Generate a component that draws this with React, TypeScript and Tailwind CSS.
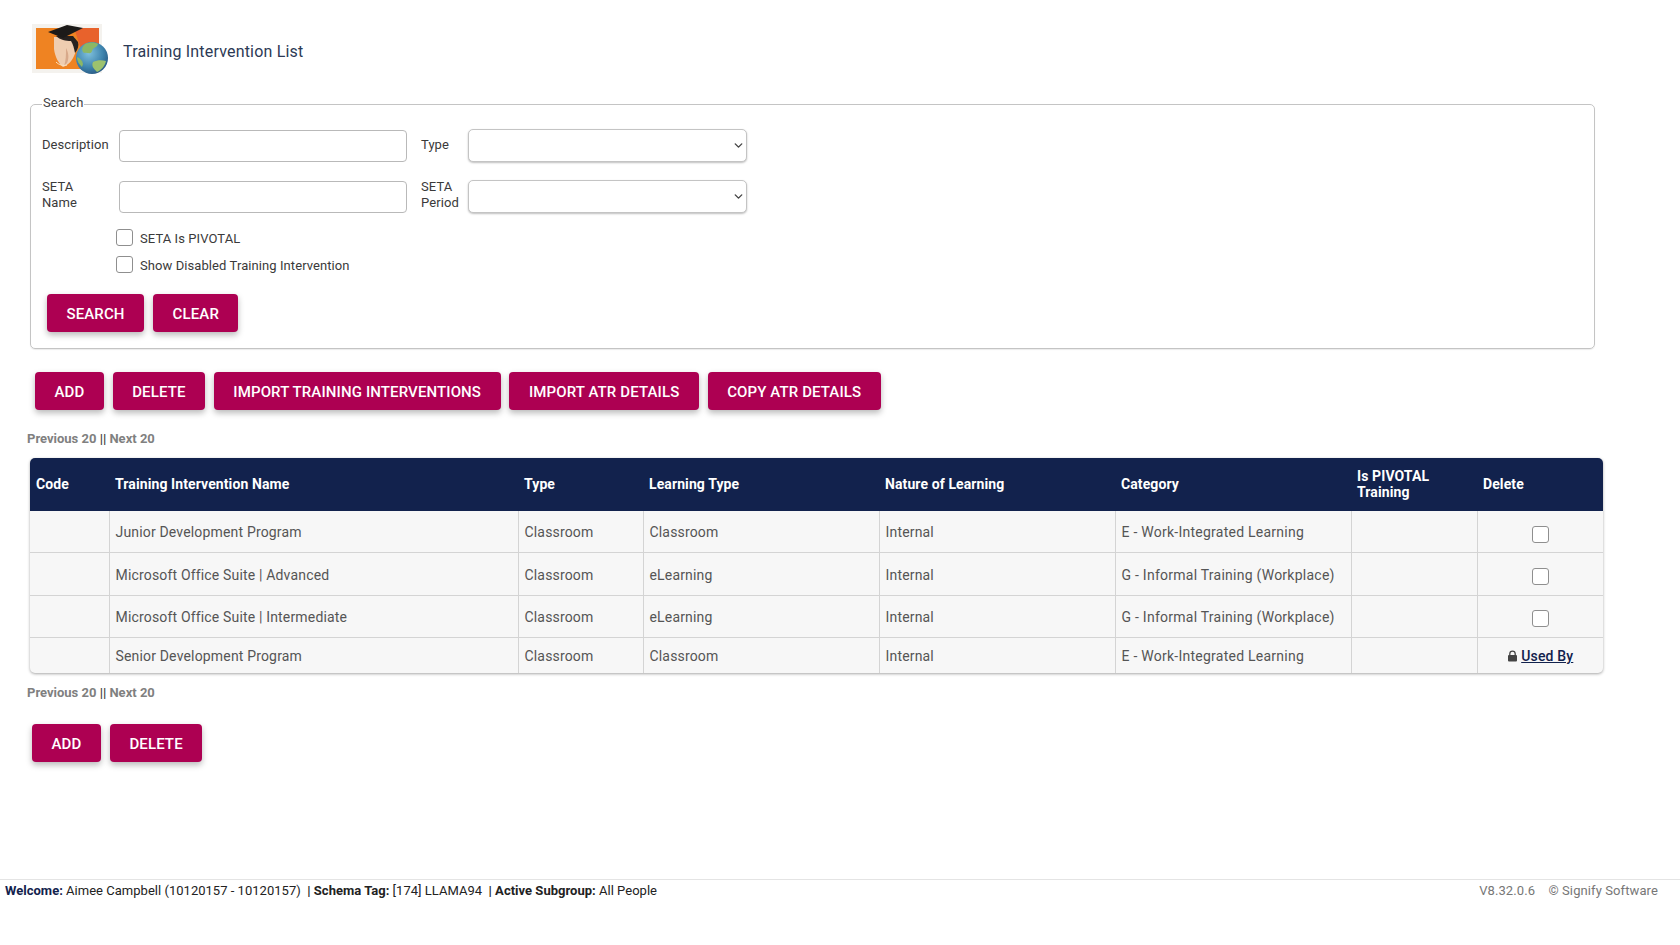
import React from 'react';
import { ChevronDown } from 'lucide-react';

type Row = {
  name: string;
  learning: string;
  category: string;
  usedBy?: boolean;
  rowClass: string;
};

const rows: Row[] = [
  { name: 'Junior Development Program', learning: 'Classroom', category: 'E - Work-Integrated Learning', rowClass: 'h-[41px]' },
  { name: 'Microsoft Office Suite | Advanced', learning: 'eLearning', category: 'G - Informal Training (Workplace)', rowClass: 'h-[43px]' },
  { name: 'Microsoft Office Suite | Intermediate', learning: 'eLearning', category: 'G - Informal Training (Workplace)', rowClass: 'h-[42px]' },
  { name: 'Senior Development Program', learning: 'Classroom', category: 'E - Work-Integrated Learning', usedBy: true, rowClass: 'h-[36px]' },
];

const Btn = ({ children }: { children: React.ReactNode }) => (
  <button className="h-[38px] rounded-[4px] bg-[#ad0052] px-[19.5px] pt-[2px] text-[15px] font-medium uppercase tracking-[0.12px] text-white shadow-[0_3px_6px_rgba(0,0,0,0.28)]">
    {children}
  </button>
);

const Pager = () => (
  <p className="text-[13px] font-bold leading-[16px] tracking-normal text-[#808080]">
    Previous 20 <span className="text-[#444]">||</span> Next 20
  </p>
);

const Check = ({ className = '' }: { className?: string }) => (
  <input
    type="checkbox"
    className={`h-[17px] w-[17px] appearance-none rounded-[3px] border border-[#8f8f8f] bg-white ${className}`}
  />
);

const Select = () => (
  <div className="relative h-[33px] w-[279px]">
    <select className="h-full w-full appearance-none rounded-[5px] border border-[#c4c4c4] bg-white shadow-[0_1px_2px_rgba(0,0,0,0.25)]"></select>
    <ChevronDown size={13} strokeWidth={2.6} className="pointer-events-none absolute right-[2px] top-[10px] text-[#444]" />
  </div>
);

const Logo = () => (
  <svg width="77" height="51" viewBox="0 0 77 51" className="blur-[0.5px]">
    <defs>
      <radialGradient id="globe" cx="0.4" cy="0.35" r="0.75">
        <stop offset="0" stopColor="#7fc0dc" />
        <stop offset="0.6" stopColor="#3d83ad" />
        <stop offset="1" stopColor="#254f78" />
      </radialGradient>
    </defs>
    <rect x="0" y="0" width="70" height="49" fill="#f4f2ee" />
    <rect x="4" y="4" width="63" height="41" fill="#ef8322" />
    <path d="M42 4h25v24H50z" fill="#e8622c" />
    <path d="M22 13h20c3 6 3 13 0 19-2 5-6 9-11 11-4-3-8-10-9-18z" fill="#efcdb0" />
    <path d="M34 24c3 5 3 11 1 15l-3 3c2-5 2-12 2-18z" fill="#d8a98a" />
    <path d="M24 12h17l5 6c1 4 0 7-3 11-1-5-2-9-4-12-5 0-11-1-15-5z" fill="#26211f" />
    <path d="M16 8L35 1l16 3-20 10z" fill="#1c1a19" />
    <path d="M24 38c3 3 7 4 11 3" fill="none" stroke="#fbe3c0" strokeWidth="1" />
    <circle cx="60" cy="34" r="16" fill="url(#globe)" />
    <path d="M53 20c5-2 10-2 13 0-1 4-5 3-6 7-1 4-5 1-8 2-3-3-2-6 1-9z" fill="#8cb765" />
    <path d="M61 38c4-2 9-2 13-1-1 5-5 9-9 11-3-3-6-6-4-10z" fill="#9cc26e" />
    <path d="M45 33c3 1 5 3 6 7l-1 3c-3-3-5-6-5-10z" fill="#8cb765" />
  </svg>
);

const LockIcon = () => (
  <svg width="11" height="12" viewBox="0 0 11 12" className="mr-[3px] inline-block align-[-1px]">
    <path d="M2.8 5.5V3.8a2.7 2.7 0 0 1 5.4 0v1.7" fill="none" stroke="#444" strokeWidth="1.3" />
    <rect x="1" y="5" width="9" height="6.5" rx="1" fill="#444" />
  </svg>
);

const cellClass = 'border-r border-[#d4d4d4] px-[6px] pt-[3px] align-middle';

export default function App() {
  return (
    <div className="min-h-screen bg-white font-['Roboto',sans-serif] text-[13px] tracking-[0.08px] text-[#3a3a3a]">
      <div className="flex items-center pl-[32px] pt-[24px]">
        <Logo />
        <h1 className="ml-[14px] mt-[5px] text-[16px] font-normal leading-[20px] tracking-[0.18px] text-[#2c3a55]">Training Intervention List</h1>
      </div>

      <fieldset className="ml-[30px] mt-[22px] h-[252px] w-[1565px] rounded-[5px] border border-[#c4c4c4] pl-[11px] shadow-[0_1px_1px_rgba(0,0,0,0.08)]">
        <legend className="relative -top-[2px] px-px text-[13px] leading-[15px] text-[#444]">Search</legend>

        <div className="mt-[17px] flex items-center">
          <label className="mb-[2px] w-[77px]">Description</label>
          <input className="h-[32px] w-[288px] rounded-[4px] border border-[#b9b9b9] bg-white" />
          <label className="mb-[2px] ml-[14px] w-[47px]">Type</label>
          <Select />
        </div>

        <div className="mt-[17px] flex items-center">
          <label className="mb-[3px] w-[77px] leading-[16px]">SETA<br />Name</label>
          <input className="h-[32px] w-[288px] rounded-[4px] border border-[#b9b9b9] bg-white" />
          <label className="mb-[3px] ml-[14px] w-[47px] leading-[16px]">SETA<br />Period</label>
          <Select />
        </div>

        <div className="mt-[15px] flex flex-col gap-[10px] pl-[74px]">
          <label className="flex h-[17px] items-center gap-[7px]"><Check className="-mt-[1px]" /><span className="mt-[2px]">SETA Is PIVOTAL</span></label>
          <label className="flex h-[17px] items-center gap-[7px]"><Check className="-mt-[1px]" /><span className="mt-[2px]">Show Disabled Training Intervention</span></label>
        </div>

        <div className="mt-[21px] flex gap-[9px] pl-[5px]">
          <Btn>Search</Btn>
          <Btn>Clear</Btn>
        </div>
      </fieldset>

      <div className="ml-[35px] mt-[23px] flex gap-[8.8px]">
        <Btn>Add</Btn>
        <Btn>Delete</Btn>
        <Btn>Import Training Interventions</Btn>
        <Btn>Import ATR Details</Btn>
        <Btn>Copy ATR Details</Btn>
      </div>

      <div className="ml-[27px] mt-[21px]"><Pager /></div>

      <div className="ml-[30px] mt-[11px] w-[1573px] overflow-hidden rounded-[5px] bg-[#f7f7f7] shadow-[0_1px_3px_rgba(0,0,0,0.35)]">
        <table className="w-full table-fixed border-collapse text-[14px] tracking-[0.17px] text-[#555]">
          <colgroup>
            <col className="w-[79px]" />
            <col className="w-[409px]" />
            <col className="w-[125px]" />
            <col className="w-[236px]" />
            <col className="w-[236px]" />
            <col className="w-[236px]" />
            <col className="w-[126px]" />
            <col className="w-[126px]" />
          </colgroup>
          <thead>
            <tr className="h-[53px] bg-[#12224d] text-left text-white">
              {['Code', 'Training Intervention Name', 'Type', 'Learning Type', 'Nature of Learning', 'Category', 'Is PIVOTAL Training', 'Delete'].map(h => (
                <th key={h} className="px-[6px] pb-px font-bold leading-[16px] tracking-[0.1px]">{h}</th>
              ))}
            </tr>
          </thead>
          <tbody>
            {rows.map((r, i) => (
              <tr key={r.name} className={`${r.rowClass} ${i < rows.length - 1 ? 'border-b border-[#d4d4d4]' : ''}`}>
                <td className={cellClass}></td>
                <td className={cellClass}>{r.name}</td>
                <td className={cellClass}>Classroom</td>
                <td className={cellClass}>{r.learning}</td>
                <td className={cellClass}>Internal</td>
                <td className={cellClass}><span className="tracking-[0.25px]">{r.category}</span></td>
                <td className={cellClass}></td>
                <td className="px-[6px] pt-[2px] text-center align-middle">
                  {r.usedBy ? (
                    <span className="font-medium">
                      <LockIcon />
                      <a href="#" className="text-[#12224d] underline">Used By</a>
                    </span>
                  ) : (
                    <Check className="mt-[2px] align-middle" />
                  )}
                </td>
              </tr>
            ))}
          </tbody>
        </table>
      </div>

      <div className="ml-[27px] mt-[12px]"><Pager /></div>

      <div className="ml-[32px] mt-[23px] flex gap-[9px]">
        <Btn>Add</Btn>
        <Btn>Delete</Btn>
      </div>

      <div className="mt-[117px] flex h-[23px] items-center justify-between border-t border-[#e4e4e4] pl-[5px] pr-[22px] text-[13px] tracking-[0.02px] text-[#333]">
        <p className="text-[#222]">
          <b className="font-bold text-[#12224d]">Welcome:</b> Aimee Campbell (10120157 - 10120157) &nbsp;<b className="font-bold">| Schema Tag:</b> [174] LLAMA94 &nbsp;<b className="font-bold">| Active Subgroup:</b> All People
        </p>
        <p className="tracking-[0.1px] text-[#777]">V8.32.0.6 &nbsp;&nbsp; © Signify Software</p>
      </div>
    </div>
  );
}
